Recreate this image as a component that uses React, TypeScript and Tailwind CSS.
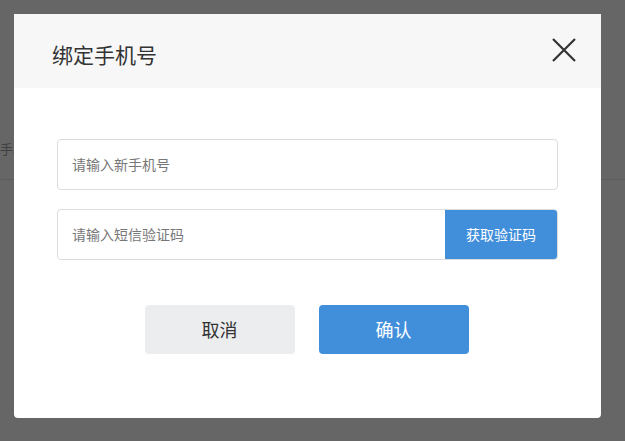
const font = { fontFamily: '"Noto Sans CJK SC", "Noto Sans", sans-serif' };

export default function App() {
  return (
    <div className="relative h-[441px] w-[625px] overflow-hidden bg-[#666666]" style={font}>
      {/* page behind the overlay */}
      <div className="pt-[137px]">
        <div className="h-[24px] text-[13px] leading-[24px] text-[#3f3f3f]">手机号</div>
        <div className="mt-[18px] h-px w-full bg-[#5c5c5c]" />
      </div>

      {/* modal */}
      <div className="absolute left-[14px] top-[14px] flex h-[404px] w-[587px] flex-col overflow-hidden rounded-b-[4px] bg-white">
        <div className="flex h-[74px] items-center justify-between bg-[#f7f7f7] pl-[38px] pr-[25px]">
          <h2 className="pt-[8px] text-[21px] font-normal text-[#333]">绑定手机号</h2>
          <button className="-mt-[3px] text-[#333]">
            <svg width="24" height="24" viewBox="0 0 24 24" fill="none" stroke="currentColor" strokeWidth="2.2">
              <path d="M1 1L23 23M23 1L1 23" />
            </svg>
          </button>
        </div>

        <div className="flex flex-col gap-[19px] pl-[43px] pr-[43px] pt-[51px]">
          <div className="flex h-[51px] items-center rounded-[4px] border border-[#dcdcdc] pl-[14px] text-[14px] text-[#777]">
            请输入新手机号
          </div>
          <div className="flex h-[51px] overflow-hidden rounded-[4px] border border-[#dcdcdc]">
            <div className="flex flex-1 items-center pl-[14px] text-[14px] text-[#777]">请输入短信验证码</div>
            <button className="w-[112px] bg-[#418fdb] text-[14px] text-white">获取验证码</button>
          </div>
        </div>

        <div className="mt-[45px] flex justify-center gap-[24px] pr-[2px]">
          <button className="h-[49px] w-[150px] rounded-[4px] bg-[#ecedef] text-[18px] text-[#333]">取消</button>
          <button className="h-[49px] w-[150px] rounded-[4px] bg-[#418fdb] text-[18px] text-white">确认</button>
        </div>
      </div>
    </div>
  );
}
